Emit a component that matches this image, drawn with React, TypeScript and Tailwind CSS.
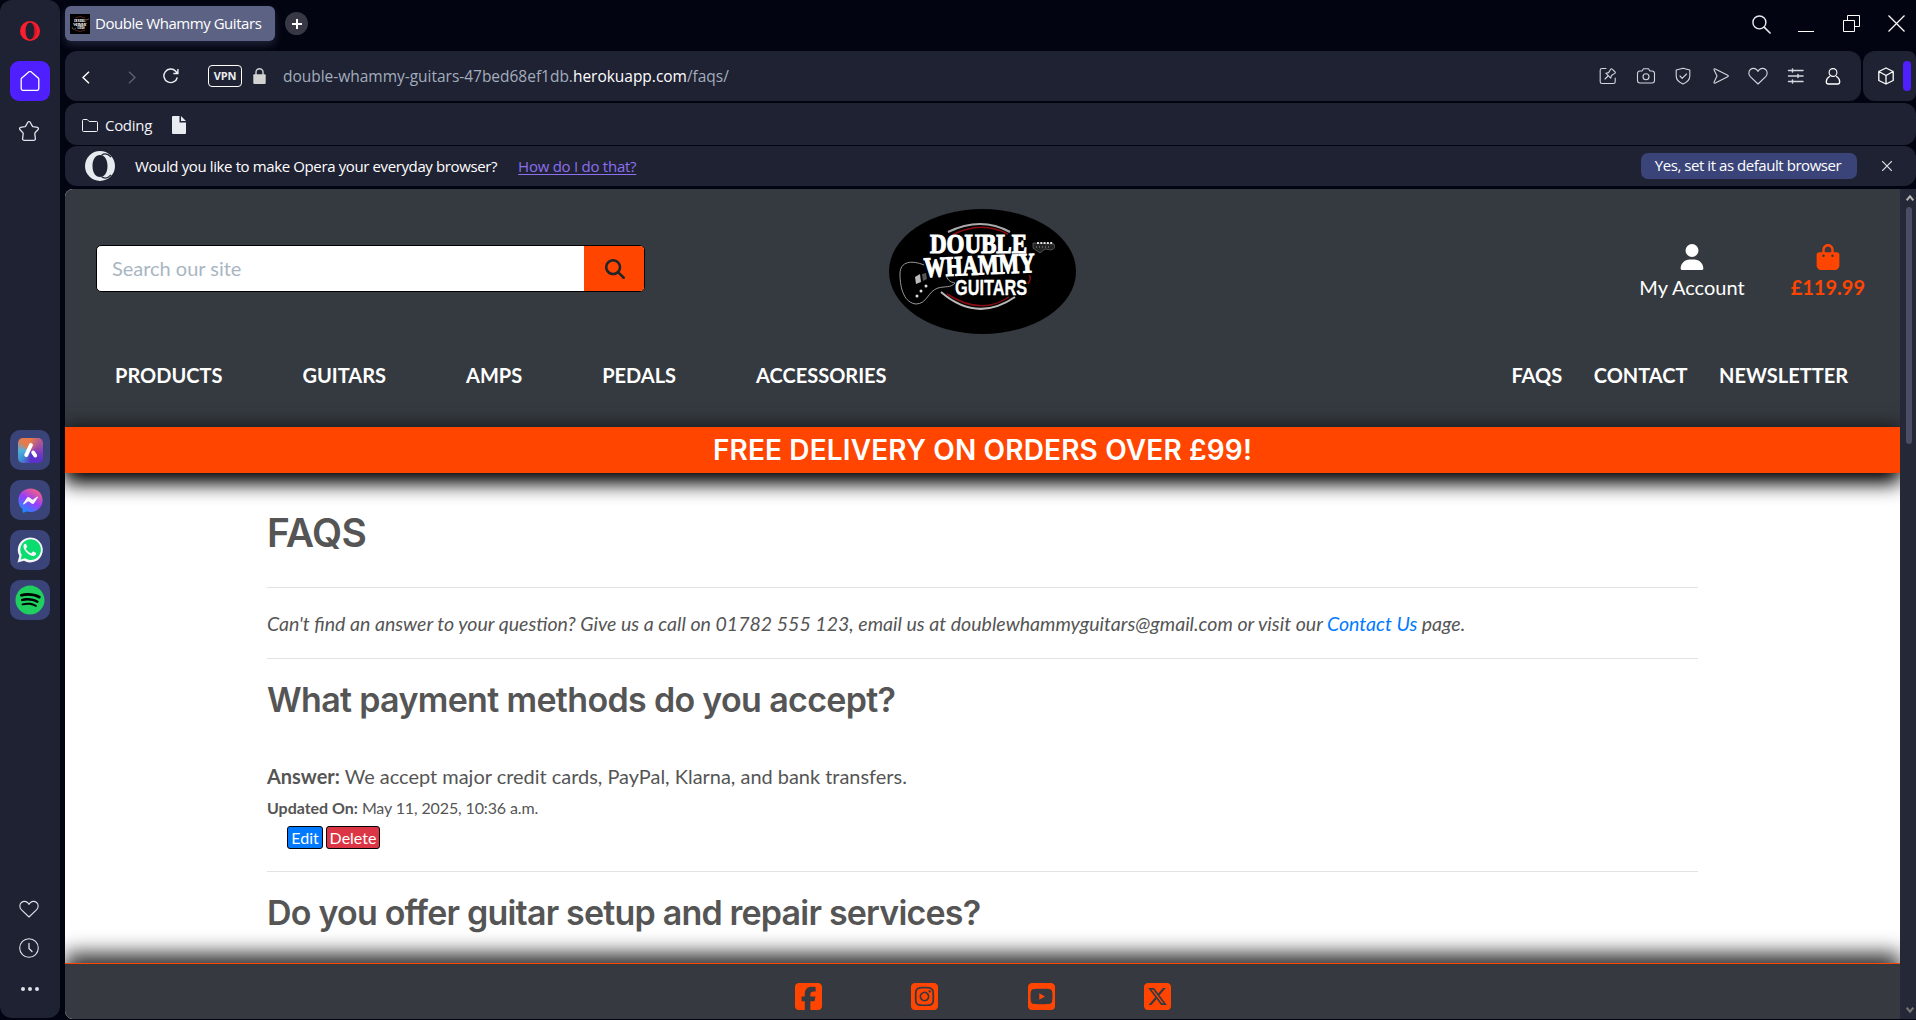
import React from "react";
import {
  FaUser,
  FaBagShopping,
  FaMagnifyingGlass,
  FaSquareFacebook,
  FaSquareInstagram,
  FaSquareYoutube,
  FaSquareXTwitter,
  FaSpotify,
  FaFacebookMessenger,
} from "react-icons/fa6";

type IconProps = { className?: string; children: React.ReactNode; box?: string };

function Line({ className = "", box = "0 0 20 20", children }: IconProps) {
  return (
    <svg
      viewBox={box}
      className={"shrink-0 " + className}
      fill="none"
      stroke="currentColor"
      strokeWidth="1.1"
      strokeLinecap="round"
      strokeLinejoin="round"
    >
      {children}
    </svg>
  );
}

const HEART = "M10 18 2.300 10.700C.3 8.500.4 5.300 2.400 3.500 4.400 1.800 7.300 2 8.900 3.900L10 5.300l1.100-1.400c1.600-1.900 4.500-2.100 6.500-.4C19.600 5.300 19.700 8.500 17.700 10.700Z";

function Sidebar() {
  return (
    <aside className="flex h-[1018px] w-[60px] shrink-0 flex-col items-center rounded-xl bg-[#1f2233] text-[#dfe2ea]">
      <svg viewBox="0 0 20 20" className="mt-[21px] size-5 shrink-0">
        <path fillRule="evenodd" fill="#fa1e2e" d="M10 0a10 10 0 1 0 0 20 10 10 0 0 0 0-20Zm0 1.600c2.700 0 4.400 3.700 4.400 8.400s-1.700 8.400-4.400 8.400S5.600 14.700 5.600 10 7.300 1.600 10 1.600Z" />
        <path fill="#b70d1c" d="M11 1.700c3-.6 6 3.300 6 8.300s-3 8.900-6 8.300c2-1 3.400-4 3.400-8.300S13 2.700 11 1.700Z" opacity=".5" />
      </svg>
      <div className="mt-[20px] flex size-10 shrink-0 items-center justify-center rounded-[9px] bg-[#4f1fff]">
        <Line className="size-5 text-white">
          <path strokeWidth="1.3" d="M1.200 8.300c0-.6.200-1 .6-1.400L9 .7c.6-.5 1.400-.5 2 0l7.200 6.200c.4.400.6.800.6 1.400v9.200c0 1-.8 1.900-1.900 1.900H3.100c-1 0-1.900-.8-1.900-1.900Z" />
        </Line>
      </div>
      <Line className="mt-[19px] -ml-0.5 h-[22px] w-[22px]" box="0 0 22 22">
        <path strokeWidth="1.300" d="M9.800 2.200c.5-.9 1.900-.9 2.400 0l2 3.700c.2.400.5.600.9.700l4.300.8c1 .2 1.400 1.400.7 2.100l-3 3.200c-.3.300-.4.700-.3 1.100l.6 4.900c.1 1-.7 1.600-1.600 1.600H6.200c-.9 0-1.700-.6-1.600-1.600l.6-4.900c.1-.4 0-.8-.3-1.100l-3-3.200c-.7-.7-.3-1.900.7-2.100l4.300-.8c.4-.1.700-.3.900-.7Z" />
      </Line>

      <div className="mt-[288px] flex flex-col gap-[10px]">
        <div className="flex size-10 items-center justify-center rounded-[10px] bg-[#3a4478]">
          <div className="flex size-[25px] items-center justify-center rounded-[5px] bg-[conic-gradient(from_45deg,#b25a92,#8a3fb8,#5b31c9,#5b31c9,#3f8fd0,#4fb0dd,#e77a4d,#e77a4d,#b25a92)]">
            <svg viewBox="0 0 25 25" className="size-[25px]">
              <path d="M12.900 7 8.300 17" stroke="#fff" strokeWidth="4" strokeLinecap="round" />
              <path d="m15.200 14.500 2 3" stroke="#fff" strokeWidth="4" strokeLinecap="round" />
            </svg>
          </div>
        </div>
        <div className="flex size-10 items-center justify-center rounded-[10px] bg-[#3a4478]">
          <svg className="absolute size-0">
            <defs>
              <linearGradient id="msg" x1=".2" y1="1" x2=".8" y2="0">
                <stop offset="0" stopColor="#1392ff" />
                <stop offset=".5" stopColor="#9a3dfa" />
                <stop offset="1" stopColor="#ff6574" />
              </linearGradient>
            </defs>
          </svg>
          <div className="flex size-[25px] items-center justify-center rounded-full bg-[linear-gradient(#f5f6fa,#f5f6fa)] bg-[length:17px_12px] bg-center bg-no-repeat">
            <FaFacebookMessenger size={25} fill="url(#msg)" />
          </div>
        </div>
        <div className="flex size-10 items-center justify-center rounded-[10px] bg-[#3a4478]">
          <svg viewBox="0 0 26 26" className="size-[26px]">
            <path d="M.5 25.500 2.300 19A12.500 12.500 0 1 1 7 23.800Z" fill="#f4f6f7" />
            <path d="M3.700 22.400 4.800 18A10.300 10.300 0 1 1 8 21.300Z" fill="#0bdc70" />
            <path d="M9.300 7.500c-.4-.8-.8-.8-1.300-.7-1.300.6-1.700 2-1.400 3.500.9 4 4.800 7.800 9 8.600 1.700.2 3.200-.6 3.500-2.200.1-.7 0-.8-.4-1l-2.300-1.100c-.4-.2-.7-.1-1 .3l-.9 1.100c-.3.400-.6.300-1 .1-2.100-.9-3.500-2.200-4.500-4-.2-.4-.1-.6.2-.9l.8-1c.2-.3.200-.6.100-.8Z" fill="#f4f6f7" />
          </svg>
        </div>
        <div className="flex size-10 items-center justify-center rounded-[10px] bg-[#3a4478]">
          <div className="flex size-[28px] items-center justify-center rounded-full bg-black">
            <FaSpotify className="shrink-0 text-[#1fcf60]" size={30} />
          </div>
        </div>
      </div>

      <div className="mt-auto flex flex-col items-center text-[#dfe2ea]">
        <Line className="-ml-[2px] size-5">
          <path d={HEART} />
        </Line>
        <Line className="mt-[19px] -ml-[2px] size-5">
          <circle cx="10" cy="10" r="9.300" />
          <path d="M10 5.500v5l3 3" strokeWidth="1.300" />
        </Line>
        <div className="mt-[29px] mb-[27px] flex gap-[3px]">
          <span className="size-1 rounded-full bg-[#dfe2ea]" />
          <span className="size-1 rounded-full bg-[#dfe2ea]" />
          <span className="size-1 rounded-full bg-[#dfe2ea]" />
        </div>
      </div>
    </aside>
  );
}

function TabStrip() {
  return (
    <div className="flex h-[51px] items-start">
      <div className="mt-[6px] flex h-[35px] w-[210px] items-center rounded-md bg-[#5c6283] pl-[5px] shadow-[0_4px_8px_rgba(92,98,131,0.35)]">
        <svg viewBox="0 0 20 20" className="size-5 shrink-0 bg-black" fontFamily="Liberation Serif" fontWeight="700" fill="#ddd" textAnchor="middle">
          <path d="M5 4q5-3 10 0M5 16q5 3 10 0" fill="none" stroke="#733" strokeWidth=".7" />
          <path d="M2 13q1 4 4 1M16 6l3-1" fill="none" stroke="#888" strokeWidth=".7" />
          <text x="10" y="8" fontSize="4.500" textLength="12">DOUBLE</text>
          <text x="10" y="12" fontSize="4.500" textLength="14">WHAMMY</text>
          <text x="11" y="15" fontSize="3" textLength="8">GUITARS</text>
        </svg>
        <span className="ml-[5px] text-[15px] tracking-[-0.45px] whitespace-nowrap text-white">Double Whammy Guitars</span>
      </div>
      <div className="mt-[12px] ml-[10px] flex size-[23px] items-center justify-center rounded-full bg-[#363943]">
        <svg viewBox="0 0 10 10" className="size-[10px]"><path d="M5 0v10M0 5h10" stroke="#fff" strokeWidth="2" /></svg>
      </div>
      <div className="mt-[15px] mr-[11px] ml-auto flex text-[#e8eaf0]">
        <Line className="size-[19px]"><circle cx="7.800" cy="7.800" r="6.800" strokeWidth="1.500" /><path d="m13 13 6 6" strokeWidth="1.700" /></Line>
        <svg viewBox="0 0 16 17" className="ml-[27px] h-[17px] w-4"><path d="M0 16.500h16" stroke="#fff" /></svg>
        <svg viewBox="0 0 17 17" className="ml-[29px] size-[17px]" fill="none" stroke="#fff"><path d="M.5 5.500h11v11H.5ZM4.500 5.500v-5h12v11h-5" /></svg>
        <svg viewBox="0 0 17 17" className="ml-[28px] size-[17px]" stroke="#fff" strokeWidth="1.200"><path d="m.5.500 16 16M16.500.500l-16 16" /></svg>
      </div>
    </div>
  );
}

function AddressBar() {
  return (
    <div className="flex h-[50px] gap-[2px]">
      <div className="flex w-[1796px] items-center rounded-xl bg-[#1f2233] text-[#e3e6ec]">
        <svg viewBox="0 0 8 13" className="mt-0.5 ml-[17px] h-[13px] w-2" fill="none" stroke="#fff" strokeWidth="1.500"><path d="M7 .7 1 6.500l6 5.800" /></svg>
        <svg viewBox="0 0 8 13" className="mt-0.5 ml-[38px] h-[13px] w-2" fill="none" stroke="#5b5e6c" strokeWidth="1.500"><path d="m1 .7 6 5.800-6 5.800" /></svg>
        <svg viewBox="0 0 16 16" className="ml-[27px] size-4" fill="none" stroke="#f0f1f5" strokeWidth="1.400"><path d="M14.300 9.500a6.800 6.800 0 1 1-1.600-6.300l1.300 1.500M14.900 1v4.500h-4.500" /></svg>
        <div className="ml-[29px] flex h-[22px] w-[34px] items-center justify-center rounded-[4px] border border-white text-[11px] font-bold tracking-[-0.1px] text-[#e9ebf0]">VPN</div>
        <svg viewBox="0 0 13 16" className="ml-[11px] h-4 w-[13px]"><path d="M3 7V4.300a3.500 3.500 0 0 1 7 0V7" fill="none" stroke="#d3d3d3" strokeWidth="1.400" /><rect x=".3" y="6.300" width="12.400" height="9.700" rx="1" fill="#d3d3d3" /></svg>
        <span className="mt-[2px] ml-[17px] text-[15.500px] tracking-[-0.02px] whitespace-nowrap text-[#a3adbc]">
          double-whammy-guitars-47bed68ef1db.<span className="text-white">herokuapp.com</span>/faqs/
        </span>
        <div className="mr-[18px] ml-auto flex items-center gap-[17.500px] text-[#d3d6de]">
          <Line className="size-5">
            <path d="M8 2.500H4A1.800 1.800 0 0 0 2.200 4.300v11.400A1.800 1.800 0 0 0 4 17.500h11.400a1.800 1.800 0 0 0 1.800-1.800V12M7 13l3-3M7.800 7.200l5 5 .6-2.700 3.400-2.100c.6-.4.700-1 .2-1.500l-2.800-2.800c-.5-.5-1.200-.4-1.500.2l-2.100 3.300Z" />
          </Line>
          <Line className="size-5">
            <path d="M4 5h2l1.500-2.200h5L14 5h2a2.500 2.500 0 0 1 2.500 2.500v7A2.500 2.500 0 0 1 16 17H4a2.500 2.500 0 0 1-2.500-2.500v-7A2.500 2.500 0 0 1 4 5Z" /><circle cx="10" cy="10.700" r="3" />
          </Line>
          <Line className="size-5">
            <path d="M10 2.200 16.800 4v6c0 4-3.200 6.500-6.800 8-3.600-1.500-6.800-4-6.800-8V4ZM7 10l2.200 2.300L13.500 8" />
          </Line>
          <Line className="size-5">
            <path d="M3 3.200c.3-.6.800-.6 1.300-.3l12.400 6.300c.8.400.8 1.200 0 1.600L4.300 17.100c-.9.400-1.600-.2-1.200-1.100L6 10 3.100 4Z" />
          </Line>
          <Line className="size-5"><path d={HEART} /></Line>
          <Line className="size-5">
            <path d="M2.500 4.500H17M2.500 10H17M2.500 15.500H17M6.500 3v3M12 8.500v3M6.500 14v3" strokeWidth="1.500" />
          </Line>
          <Line className="size-5 text-white">
            <circle cx="10" cy="6.500" r="3.900" /><path d="M6.500 10.500c-2 1.200-3.200 3.300-3.200 5.200 0 1.300.8 2.300 2.100 2.300h9.200c1.300 0 2.100-1 2.100-2.300 0-1.900-1.200-4-3.200-5.200" strokeWidth="1.300" />
          </Line>
        </div>
      </div>
      <div className="flex flex-1 items-center rounded-l-xl rounded-r-lg bg-[#1f2233] text-white">
        <Line className="ml-[13px] size-5"><path strokeWidth="1.300" d="m10 2 7.200 3.500v9L10 18l-7.200-3.500v-9ZM2.800 5.500 10 9.500l7.200-4M10 9.500V18" /></Line>
        <div className="ml-[7px] h-[30px] w-[8px] rounded-full bg-[#4f1fff]" />
      </div>
    </div>
  );
}

function Logo() {
  return (
    <svg viewBox="0 0 187 125" className="h-[125px] w-[187px]">
      <ellipse cx="93.500" cy="62.500" rx="93.500" ry="62.500" fill="#000" />
      <g fill="none">
        <path d="M59 23q33-16 62 0" stroke="#aaa" strokeWidth="2" />
        <path d="M63 26q29-15 56-1" stroke="#8b0d12" strokeWidth="1.500" />
        <path d="M52 83q36 31 74 5" stroke="#bbb" strokeWidth="2" />
        <path d="M58 85q34 22 62 3M139 75q4-6 1-9" stroke="#8b0d12" strokeWidth="1.500" />
        <path d="M35 56c-12-5-24-4-24 9 0 16 5 29 16 30 11 0 12-13 22-16 7-2 13 0 17-5-5-1-8-3-9-9" stroke="#999" strokeWidth="1" />
        <path d="M144 34l21 1q2 5-3 6l-6-1-5 4-7-5Z" fill="#222" stroke="#777" strokeWidth=".6" />
        <path d="M148 34h16" stroke="#ddd" strokeWidth="2" strokeDasharray="2 1.300" />
        <path d="M147 38h13" stroke="#999" strokeWidth="1" strokeDasharray="1 2" />
      </g>
      <path d="m26 68 5-3 1 8-5 2Z" fill="#bbb" />
      <path d="m33 65 4-1 1 6-4 2Z" fill="#555" />
      <circle cx="37" cy="77" r="1.500" fill="#ddd" /><circle cx="32" cy="82" r="1.500" fill="#ddd" /><circle cx="28" cy="87" r="1.500" fill="#ddd" />
      <g fill="#fff" stroke="#fff" fontWeight="700">
        <text x="41" y="43.500" fontSize="28" strokeWidth="1.200" fontFamily="Liberation Serif" textLength="97" lengthAdjust="spacingAndGlyphs">DOUBLE</text>
        <text x="35" y="65.500" fontSize="28" strokeWidth="1.200" fontFamily="Liberation Serif" textLength="111" lengthAdjust="spacingAndGlyphs" transform="rotate(-2.500 90 60)">WHAMMY</text>
        <text x="66" y="85.500" fontSize="22" strokeWidth=".3" fontFamily="Liberation Sans" textLength="72" lengthAdjust="spacingAndGlyphs">GUITARS</text>
      </g>
    </svg>
  );
}

function SiteHeader() {
  return (
    <header className="h-[238px] shrink-0 bg-[#353a40] text-white">
      <div className="grid h-[164px] grid-cols-3">
        <div className="mt-[56px] ml-[31px] flex h-[47px] w-[549px] overflow-hidden rounded-[5px] border border-black bg-white">
          <div className="flex flex-1 items-center pb-[2px] pl-[15px] text-[20px] tracking-[-0.02px] text-[#a9b6c2]">Search our site</div>
          <div className="flex w-[60px] items-center justify-center bg-[#ff4500] pl-px text-[#212529]">
            <FaMagnifyingGlass size={20} />
          </div>
        </div>
        <div className="flex justify-center pt-[20px]"><Logo /></div>
        <div className="mt-[55px] mr-[35px] flex justify-end gap-[46px] text-[20px] leading-[26px]">
          <div className="flex flex-col items-center"><FaUser size={26} /><span className="mt-[4px]">My Account</span></div>
          <div className="flex flex-col items-center text-[#ff4500]"><FaBagShopping size={26} /><span className="mt-[4px] font-bold">£119.99</span></div>
        </div>
      </div>
      <nav className="flex h-[44px] items-center pr-[52px] pl-[50px] text-[20px] font-bold">
        <div className="flex gap-[80px]"><span>PRODUCTS</span><span>GUITARS</span><span>AMPS</span><span>PEDALS</span><span>ACCESSORIES</span></div>
        <div className="ml-auto flex gap-[31.500px]"><span>FAQS</span><span>CONTACT</span><span>NEWSLETTER</span></div>
      </nav>
    </header>
  );
}

const heading = "font-['Inter'] font-semibold whitespace-nowrap text-[#555]";

export default function App() {
  return (
    <div className="flex h-[1020px] w-[1916px] overflow-hidden bg-[#020411] font-['Open_Sans',sans-serif]">
      <Sidebar />
      <div className="ml-[5px] flex w-[1851px] flex-col">
        <TabStrip />
        <AddressBar />
        <div className="mt-[2px] flex h-[42px] shrink-0 items-center rounded-xl bg-[#1f2233] pt-[2px] text-[#f2f3f6]">
          <svg viewBox="0 0 16 13" className="ml-[17px] h-[13px] w-4" fill="none" stroke="currentColor"><path d="M.5 1.500q0-1 1-1h3.700l2 2h7.300q1 0 1 1v8q0 1-1 1h-13q-1 0-1-1Z" /></svg>
          <span className="ml-[7px] text-[15px] tracking-[-0.3px]">Coding</span>
          <svg viewBox="0 0 14 18" className="ml-[20px] h-[18px] w-[14px]" fill="#e9edf2"><path d="M1 0h6.500v6.500H14V17q0 1-1 1H1q-1 0-1-1V1q0-1 1-1ZM9 0l5 5H9Z" /></svg>
        </div>
        <div className="mt-px flex h-[40px] shrink-0 items-center rounded-xl bg-[#1f2233] text-[15px] text-white">
          <svg viewBox="0 0 30 30" className="ml-[20px] size-[30px]" fill="#e6ebf0">
            <path fillRule="evenodd" d="M15 0a15 15 0 1 0 0 30 15 15 0 0 0 0-30Zm0 4c4.500 0 7.500 4.500 7.500 11s-3 11-7.500 11-7.500-4.500-7.500-11S10.500 4 15 4Z" />
            <path d="M16.500 4.200c3-2 6.500-1.300 9.500 2" fill="none" stroke="#1f2233" strokeWidth="1.200" />
            <path d="M16.500 25.800c3 2 6.500 1.300 9.500-2" fill="none" stroke="#1f2233" strokeWidth="1.200" />
          </svg>
          <span className="ml-[20px] tracking-[-0.380px] whitespace-nowrap">Would you like to make Opera your everyday browser?</span>
          <span className="ml-[21px] tracking-[-0.260px] whitespace-nowrap text-[#8d6ff0] underline underline-offset-2">How do I do that?</span>
          <div className="ml-auto flex h-[26px] w-[216px] items-center justify-center rounded-[7px] bg-[#3a4478] pr-[2px] pb-px tracking-[-0.450px] whitespace-nowrap">Yes, set it as default browser</div>
          <svg viewBox="0 0 10 10" className="mr-[24px] ml-[25px] size-[10px]" stroke="#e0e2e8" strokeWidth="1.200"><path d="m0 0 10 10M10 0 0 10" /></svg>
        </div>

        <div className="mt-[3px] flex h-[830px] shrink-0 rounded-l-lg bg-[#252836]">
          <div className="flex w-[1835px] flex-col overflow-hidden rounded-l-lg bg-white font-['Lato'] text-[#555]">
            <SiteHeader />
            <div className="z-10 flex h-[46px] shrink-0 items-center justify-center bg-[#ff4500] text-[28px] shadow-[0_10px_20px_#000,0_0_20px_rgba(0,0,0,0.5)]">
              <span className="font-['Inter'] font-semibold tracking-[0.150px] whitespace-nowrap text-white">FREE DELIVERY ON ORDERS OVER £99!</span>
            </div>
            <main className="min-h-0 flex-1 overflow-hidden px-[202px]">
              <h1 className={heading + " mt-[36px] h-[48px] text-[39px] leading-[48px] tracking-[-0.600px]"}>FAQS</h1>
              <hr className="mt-[30px] border-[#e3e3e3]" />
              <p className="mt-[20px] h-[32px] text-[19.560px] leading-[32px] whitespace-nowrap italic">
                Can't find an answer to your question? Give us a call on 01782 555 123, email us at doublewhammyguitars@gmail.com or visit our <span className="text-[#007bff]">Contact Us</span> page.
              </p>
              <hr className="mt-[18px] border-[#e3e3e3]" />
              <h2 className={heading + " mt-[20px] h-[42px] text-[34px] leading-[42px] tracking-[-0.670px]"}>What payment methods do you accept?</h2>
              <p className="mt-[39px] h-[32px] text-[19.950px] leading-[32px] whitespace-nowrap"><b>Answer:</b> We accept major credit cards, PayPal, Klarna, and bank transfers.</p>
              <p className="mt-[4px] h-[24px] text-[16px] leading-[24px] tracking-[-0.130px] whitespace-nowrap"><b className="tracking-[-0.020px]">Updated On:</b> May 11, 2025, 10:36 a.m.</p>
              <div className="mt-[6px] ml-[20px] flex gap-[3px] text-[16px] leading-[21px] text-white">
                <span className="flex h-[23px] w-[36px] justify-center rounded-[3px] border border-black bg-[#007bff]">Edit</span>
                <span className="flex h-[23px] w-[54px] justify-center rounded-[3px] border border-black bg-[#dc3545]">Delete</span>
              </div>
              <hr className="mt-[22px] border-[#e3e3e3]" />
              <h2 className={heading + " mt-[20px] h-[42px] text-[34px] leading-[42px] tracking-[-0.800px]"}>Do you offer guitar setup and repair services?</h2>
            </main>
            <footer className="z-10 flex h-[56px] shrink-0 items-start justify-center gap-[89.400px] border-t border-[#ff4500] bg-[#363940] pt-[17px] pl-px text-[#ff4500] shadow-[0_-10px_20px_rgba(0,0,0,0.8)]">
              <FaSquareFacebook className="h-[31px] w-[27px]" />
              <FaSquareInstagram className="h-[31px] w-[27px]" />
              <FaSquareYoutube className="h-[31px] w-[27px]" />
              <FaSquareXTwitter className="h-[31px] w-[27px]" />
            </footer>
          </div>
          <div className="flex flex-1 flex-col items-center">
            <svg viewBox="0 0 8 6" className="mt-[6px] ml-[3px] h-[6px] w-2" fill="none" stroke="#b5b5b5" strokeWidth="2"><path d="m.7 5.300 3.300-4 3.300 4" /></svg>
            <div className="mt-[6px] ml-[2px] h-[237px] w-[6px] rounded-full bg-[#4a4d63]" />
            <svg viewBox="0 0 8 6" className="mt-auto mb-[6px] ml-[3px] h-[6px] w-2" fill="none" stroke="#777" strokeWidth="2"><path d="m.7.700 3.300 4 3.300-4" /></svg>
          </div>
        </div>
      </div>
    </div>
  );
}
